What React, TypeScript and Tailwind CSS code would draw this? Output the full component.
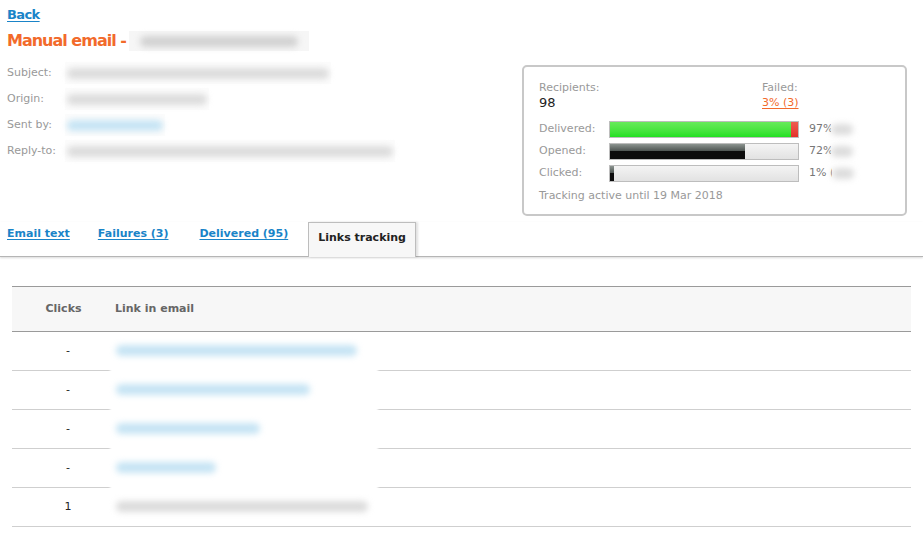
import React from 'react';

const font = { fontFamily: '"DejaVu Sans", Verdana, sans-serif' };

const Blur: React.FC<{ w: number; tone?: 'gray' | 'blue' | 'dark' }> = ({ w, tone = 'gray' }) => {
  const color = tone === 'blue' ? 'bg-[#c6e4f4]' : tone === 'dark' ? 'bg-[#d2d2d2]' : 'bg-[#dcdcdc]';
  return <span className={`inline-block h-[11px] rounded-full blur-[3px] align-middle ${color}`} style={{ width: w }} />;
};

const metaRows: { label: string; w: number; tone?: 'gray' | 'blue' }[] = [
  { label: 'Subject:', w: 262 },
  { label: 'Origin:', w: 140 },
  { label: 'Sent by:', w: 96, tone: 'blue' },
  { label: 'Reply-to:', w: 326 },
];

const Bar: React.FC<{ label: string; pct: number; green?: boolean; text: string }> = ({ label, pct, green, text }) => (
  <div className="flex items-center h-[22px]">
    <div className="w-[70px] text-[11px] text-[#999]">{label}</div>
    <div className="w-[190px] h-[17px] border border-[#bdbdbd] bg-gradient-to-b from-[#f4f4f4] to-[#e2e2e2] flex">
      {green ? (
        <>
          <div className="h-full bg-gradient-to-b from-[#66ea5a] to-[#1fe020]" style={{ width: `${pct}%` }} />
          <div className="h-full flex-1 bg-gradient-to-b from-[#ee5b4f] to-[#e3302a]" />
        </>
      ) : (
        <div className="h-full flex flex-col" style={{ width: `${pct}%` }}>
          <div className="h-[7px] bg-gradient-to-b from-[#8c9490] to-[#4e5552]" />
          <div className="flex-1 bg-[#0c0c0c]" />
        </div>
      )}
    </div>
    <div className="ml-[10px] text-[11px] text-[#777] flex items-center">
      {text}
      <span className="inline-flex items-center w-[32px] h-[16px] bg-white ml-[-2px]">
        <Blur w={22} tone="gray" />
      </span>
    </div>
  </div>
);

const links: { clicks: string; w: number; tone: 'blue' | 'gray' }[] = [
  { clicks: '-', w: 241, tone: 'blue' },
  { clicks: '-', w: 194, tone: 'blue' },
  { clicks: '-', w: 144, tone: 'blue' },
  { clicks: '-', w: 100, tone: 'blue' },
  { clicks: '1', w: 252, tone: 'gray' },
];

const tabs = [
  { label: 'Email text', gap: 'mr-[28px]' },
  { label: 'Failures (3)', gap: 'mr-[31px]' },
  { label: 'Delivered (95)', gap: 'mr-[20px]' },
];

export default function App() {
  return (
    <div className="w-[923px] h-[538px] bg-white overflow-hidden" style={font}>
      <div className="flex justify-between px-[7px]">
        <div>
          <a className="block mt-[7px] text-[13px] font-bold tracking-[-0.6px] text-[#1a84c8] underline underline-offset-2 leading-[16px] w-fit">Back</a>
          <div className="mt-[8px] flex items-center gap-[3px]">
            <span className="text-[16px] font-bold tracking-[-1px] text-[#f26a2b] leading-[20px]">Manual email -</span>
            <span className="inline-flex items-center justify-center w-[180px] h-[20px] bg-[#f6f6f6]">
              <Blur w={158} tone="dark" />
            </span>
          </div>
          <div className="mt-[9px] flex flex-col">
            {metaRows.map((r) => (
              <div key={r.label} className="flex items-center h-[26px]">
                <div className="w-[58px] text-[11px] text-[#999]">{r.label}</div>
                <span className="inline-flex items-center h-[22px] px-[2px] bg-[#fcfcfc]">
                  <Blur w={r.w} tone={r.tone} />
                </span>
              </div>
            ))}
          </div>
        </div>
        <div className="mt-[65px] mr-[9px] w-[385px] h-[151px] border-2 border-[#c8c8c8] rounded-[5px] px-[15px] pt-[13px]">
          <div className="flex">
            <div className="w-[223px]">
              <div className="text-[11px] text-[#999] leading-[15px]">Recipients:</div>
              <div className="text-[13px] text-[#222] leading-[16px]">98</div>
            </div>
            <div>
              <div className="text-[11px] text-[#999] leading-[15px]">Failed:</div>
              <a className="block text-[11px] text-[#f26a2b] underline underline-offset-2 leading-[16px]">3% (3)</a>
            </div>
          </div>
          <div className="mt-[7px]">
            <Bar label="Delivered:" pct={96.5} green text="97%" />
            <Bar label="Opened:" pct={72} text="72%" />
            <Bar label="Clicked:" pct={2} text="1% (" />
          </div>
          <div className="mt-[4px] text-[11px] text-[#999] leading-[15px]">Tracking active until 19 Mar 2018</div>
        </div>
      </div>

      <div className="mt-[6px] flex items-end h-[35px] border-b border-[#b5b5b5] shadow-[0_1px_2px_rgba(0,0,0,0.15)] px-[7px]">
        {tabs.map((t) => (
          <a
            key={t.label}
            className={`${t.gap} mb-[14px] text-[11px] font-bold text-[#1a84c8] underline underline-offset-2`}
          >
            {t.label}
          </a>
        ))}
        <div className="mb-[-1px] h-[35px] px-[9px] pt-[7px] bg-[#f7f7f7] border border-b-0 border-[#bdbdbd] shadow-[2px_0_2px_rgba(0,0,0,0.12)] text-[11px] font-bold text-[#222]">
          Links tracking
        </div>
      </div>

      <div className="relative mx-[12px] mt-[29px] border-t border-[#9a9a9a]">
        <div className="flex items-center h-[45px] bg-[#f7f7f7] border-b border-[#9a9a9a] text-[11px] font-bold text-[#666]">
          <div className="w-[103px] text-center">Clicks</div>
          <div>Link in email</div>
        </div>
        <div className="absolute left-[98px] top-[56px] w-[268px] h-[175px] bg-white blur-[1px]" />
        {links.map((l, i) => (
          <div key={i} className="flex items-center h-[39px] border-b border-[#cfcfcf] text-[11px] text-[#222]">
            <div className="w-[104px] pl-[8px] text-center">{l.clicks}</div>
            <div className="relative z-10">
              <Blur w={l.w} tone={l.tone} />
            </div>
          </div>
        ))}
      </div>
    </div>
  );
}
